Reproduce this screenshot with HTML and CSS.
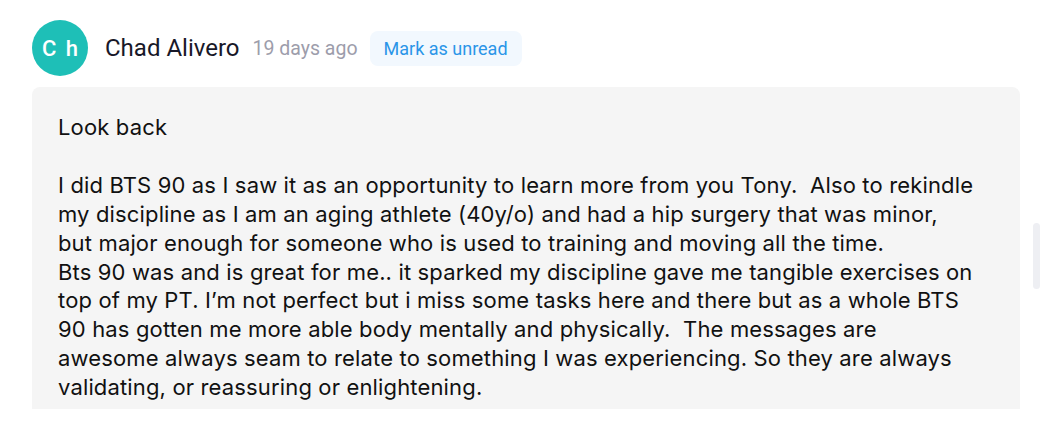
FILE: index.html
```html
<!DOCTYPE html>
<html>
<head>
<meta charset="utf-8">
<link rel="stylesheet" href="styles.css">
</head>
<body>
<div class="page">
  <div class="header">
    <div class="avatar">C h</div>
    <div class="name">Chad Alivero</div>
    <div class="time">19 days ago</div>
    <button class="mark">Mark as unread</button>
  </div>
  <div class="message">
    <p class="text">Look back<br><br>I did BTS 90 as I saw it as an opportunity to learn more from you Tony.&nbsp; Also to rekindle<br>my discipline as I am an aging athlete (40y/o) and had a hip surgery that was minor,<br>but major enough for someone who is used to training and moving all the time.<br>Bts 90 was and is great for me.. it sparked my discipline gave me tangible exercises on<br>top of my PT. I’m not perfect but i miss some tasks here and there but as a whole BTS<br>90 has gotten me more able body mentally and physically.&nbsp; The messages are<br>awesome always seam to relate to something I was experiencing. So they are always<br>validating, or reassuring or enlightening.</p>
  </div>
</div>
<div class="scrollthumb"></div>
</body>
</html>
```
FILE: styles.css
```css
html, body {
  margin: 0;
  padding: 0;
  background: #ffffff;
}
body {
  width: 1064px;
  height: 441px;
  overflow: hidden;
  position: relative;
}
.page {
  padding: 20px 44px 0 32px;
}
.header {
  display: flex;
  align-items: center;
  height: 56px;
}
.avatar {
  width: 56px;
  height: 56px;
  border-radius: 50%;
  background: #1ebfb7;
  color: #ffffff;
  font-family: Roboto, "Liberation Sans", sans-serif;
  font-size: 22px;
  font-weight: 500;
  letter-spacing: 2px;
  padding-left: 2px;
  box-sizing: border-box;
  display: flex;
  align-items: center;
  justify-content: center;
}
.name {
  margin-left: 17px;
  font-family: Roboto, "Liberation Sans", sans-serif;
  font-size: 24px;
  color: #181828;
}
.time {
  margin-left: 13px;
  font-family: Roboto, "Liberation Sans", sans-serif;
  font-size: 19.5px;
  color: #9d9dab;
}
.mark {
  margin-left: 12px;
  height: 35px;
  padding: 0 14px;
  border: none;
  border-radius: 8px;
  background: #f2f8fe;
  color: #2a95e8;
  font-family: Roboto, "Liberation Sans", sans-serif;
  font-size: 18px;
}
.message {
  margin-top: 11px;
  background: #f5f5f5;
  border-radius: 8px 8px 0 0;
  padding: 26px 26px 5px 26px;
  height: 291px;
  box-sizing: content-box;
}
.text {
  margin: 0;
  font-family: Inter, "Noto Sans", sans-serif;
  font-size: 22px;
  letter-spacing: 0.15px;
  line-height: 28.9px;
  color: #111111;
  white-space: nowrap;
}
.scrollthumb {
  position: absolute;
  left: 1033px;
  top: 223px;
  width: 7px;
  height: 66px;
  border-radius: 4px;
  background: #eeeff3;
}
```
